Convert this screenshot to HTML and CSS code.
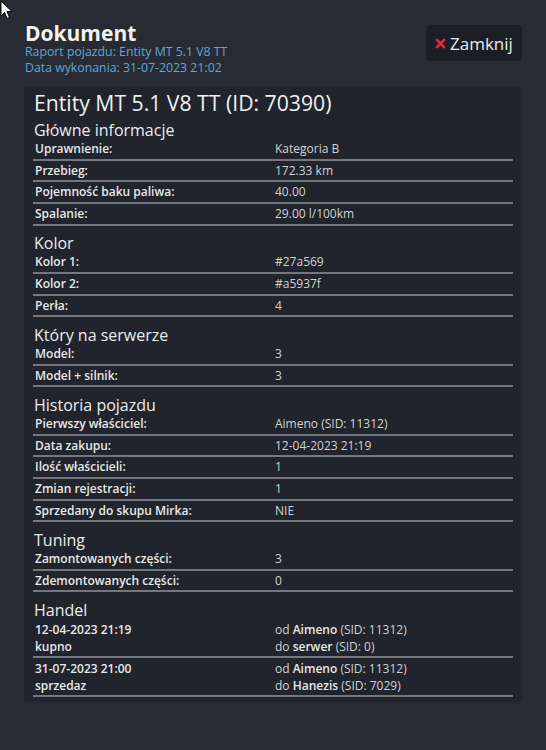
FILE: index.html
```html
<!DOCTYPE html>
<html lang="pl">
<head>
<meta charset="utf-8">
<title>Dokument</title>
<link rel="stylesheet" href="styles.css">
</head>
<body>
<svg class="cursor" width="14" height="20" viewBox="0 0 14 20"><path d="M1 1 L1 16 L4.5 12.5 L7 18.5 L9.5 17.5 L7 11.5 L12 11.5 Z" fill="#fff" stroke="#000" stroke-width="1"/></svg>
<header class="top">
  <div class="heading">
    <h1 class="doc-title">Dokument</h1>
    <div class="sub">Raport pojazdu: Entity MT 5.1 V8 TT</div>
    <div class="sub">Data wykonania: 31-07-2023 21:02</div>
  </div>
  <button class="close-btn"><svg class="x-icon" width="11" height="11" viewBox="0 0 11 11"><path d="M1.2 1.2 L9.8 9.8 M9.8 1.2 L1.2 9.8" stroke="#e5283a" stroke-width="2.6"/></svg><span>Zamknij</span></button>
</header>

<main class="panel">
  <h2 class="veh-title">Entity MT 5.1 V8 TT (ID: 70390)</h2>

  <section class="sec">
    <h3 class="sec-title">Główne informacje</h3>
    <div class="tbl">
      <div class="row"><div class="lbl">Uprawnienie:</div><div class="val">Kategoria B</div></div>
      <div class="row"><div class="lbl">Przebieg:</div><div class="val">172.33 km</div></div>
      <div class="row"><div class="lbl">Pojemność baku paliwa:</div><div class="val">40.00</div></div>
      <div class="row"><div class="lbl">Spalanie:</div><div class="val">29.00 l/100km</div></div>
    </div>
  </section>

  <section class="sec">
    <h3 class="sec-title">Kolor</h3>
    <div class="tbl">
      <div class="row"><div class="lbl">Kolor 1:</div><div class="val">#27a569</div></div>
      <div class="row"><div class="lbl">Kolor 2:</div><div class="val">#a5937f</div></div>
      <div class="row"><div class="lbl">Perła:</div><div class="val">4</div></div>
    </div>
  </section>

  <section class="sec">
    <h3 class="sec-title">Który na serwerze</h3>
    <div class="tbl">
      <div class="row"><div class="lbl">Model:</div><div class="val">3</div></div>
      <div class="row"><div class="lbl">Model + silnik:</div><div class="val">3</div></div>
    </div>
  </section>

  <section class="sec">
    <h3 class="sec-title">Historia pojazdu</h3>
    <div class="tbl">
      <div class="row"><div class="lbl">Pierwszy właściciel:</div><div class="val">Aimeno (SID: 11312)</div></div>
      <div class="row"><div class="lbl">Data zakupu:</div><div class="val">12-04-2023 21:19</div></div>
      <div class="row"><div class="lbl">Ilość właścicieli:</div><div class="val">1</div></div>
      <div class="row"><div class="lbl">Zmian rejestracji:</div><div class="val">1</div></div>
      <div class="row"><div class="lbl">Sprzedany do skupu Mirka:</div><div class="val">NIE</div></div>
    </div>
  </section>

  <section class="sec">
    <h3 class="sec-title">Tuning</h3>
    <div class="tbl">
      <div class="row"><div class="lbl">Zamontowanych części:</div><div class="val">3</div></div>
      <div class="row"><div class="lbl">Zdemontowanych części:</div><div class="val">0</div></div>
    </div>
  </section>

  <section class="sec">
    <h3 class="sec-title">Handel</h3>
    <div class="tbl">
      <div class="row row-2"><div class="lbl">12-04-2023 21:19<br>kupno</div><div class="val">od <b>Aimeno</b> (SID: 11312)<br>do <b>serwer</b> (SID: 0)</div></div>
      <div class="row row-2"><div class="lbl">31-07-2023 21:00<br>sprzedaz</div><div class="val">od <b>Aimeno</b> (SID: 11312)<br>do <b>Hanezis</b> (SID: 7029)</div></div>
    </div>
  </section>
</main>
</body>
</html>
```

FILE: styles.css
```css
html, body {
  margin: 0;
  padding: 0;
}
body {
  background: #282b33;
  font-family: "Open Sans", "DejaVu Sans", sans-serif;
  color: #e6e6e6;
  width: 546px;
  height: 750px;
  overflow: hidden;
  position: relative;
}
.cursor {
  position: absolute;
  left: 0;
  top: 0;
}
.top {
  display: flex;
  justify-content: space-between;
  align-items: flex-start;
  padding: 23px 24px 0 25px;
}
.doc-title {
  margin: 0;
  font-size: 21px;
  line-height: 21px;
  font-weight: 700;
  color: #f2f2f2;
}
.sub {
  font-size: 12.3px;
  line-height: 15.5px;
  color: #5ea7d6;
}
.close-btn {
  margin-top: 2px;
  display: flex;
  align-items: center;
  gap: 4px;
  height: 36px;
  width: 96px;
  padding: 0 0 0 9px;
  background: #1c1e25;
  border: none;
  border-radius: 4px;
  font-family: "Open Sans", "DejaVu Sans", sans-serif;
  font-size: 17px;
  color: #ebebeb;
}
.x-icon {
  flex: none;
  margin-top: 1px;
}
.panel {
  margin: 11px 24px 0 24px;
  background: #21242c;
  border-radius: 4px;
  padding: 5px 9px 5px 9px;
}
.veh-title {
  margin: 0 0 0 1px;
  font-size: 21.2px;
  line-height: 24px;
  font-weight: 400;
  color: #f0f0f0;
}
.sec {
  margin-top: 8.5px;
}
.sec:first-of-type {
  margin-top: 6px;
}
.sec-title {
  margin: 0 0 0 1px;
  font-size: 16px;
  line-height: 18px;
  font-weight: 400;
  color: #ececec;
}
.row {
  display: grid;
  grid-template-columns: 1fr 1fr;
  border-bottom: 2px solid #74777e;
  font-size: 12px;
  line-height: 16.7px;
}
.lbl, .val {
  padding: 2px 2px 1px 2px;
}
.lbl {
  font-weight: 600;
  color: #e8e8e8;
}
.val {
  color: #d2d2d2;
}
.val b {
  font-weight: 600;
  color: #e8e8e8;
}
.row-2 {
  line-height: 17px;
}
```
